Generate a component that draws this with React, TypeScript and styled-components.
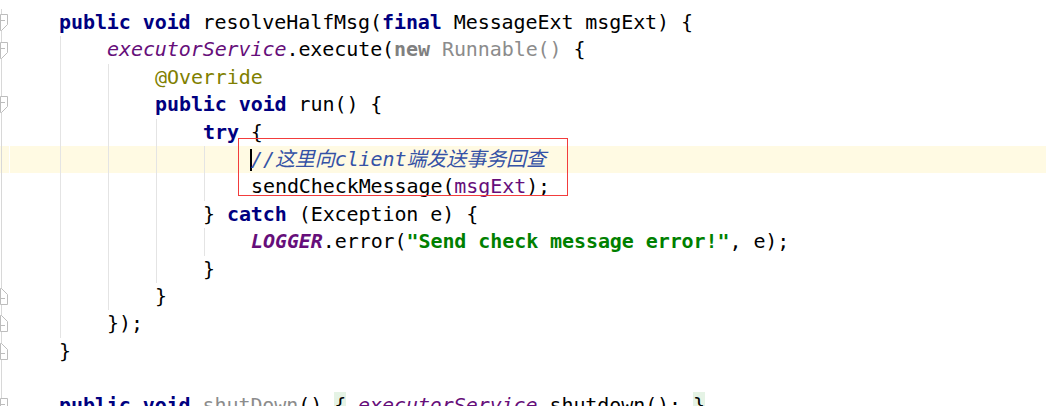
import React from 'react'
import styled, { createGlobalStyle, css } from 'styled-components'

type Kind = 'plain' | 'kw' | 'field' | 'annot' | 'fadedKw' | 'faded' | 'str' | 'const' | 'var' | 'comment' | 'unused' | 'fold'
type Token = [Kind, string]
type Fold = 'open' | 'close' | undefined

interface Line {
  indent: number
  guides: number
  tokens: Token[]
  fold?: Fold
  current?: boolean
  caret?: boolean
}

const GlobalStyle = createGlobalStyle`
  html, body {
    margin: 0;
    padding: 0;
    background: #ffffff;
  }
  body {
    width: 1046px;
    height: 406px;
    overflow: hidden;
  }
`

const Editor = styled.div`
  position: relative;
  width: 1046px;
  height: 406px;
  padding-top: 9px;
  box-sizing: border-box;
  overflow: hidden;
  display: flex;
  flex-direction: column;
  background: #ffffff;
  font-family: 'DejaVu Sans Mono', 'Noto Sans CJK SC', monospace;
  font-size: 20px;
  letter-spacing: -0.08px;
  color: #000000;
`

const Row = styled.div<{ $current?: boolean }>`
  display: flex;
  flex: none;
  height: 27.4px;
  line-height: 27.4px;
  background: ${({ $current }) => ($current ? '#fffae3' : 'transparent')};
`

const Gutter = styled.div`
  flex: none;
  width: 9px;
  margin-right: 1px;
  display: flex;
  align-items: center;
  background: linear-gradient(to right, transparent 1px, #d8d8d8 1px, #d8d8d8 2px, transparent 2px);
  box-shadow: 1px 0 0 #ffffff;
`

const Code = styled.div`
  display: flex;
  align-items: stretch;
  padding-left: 49px;
  white-space: pre;
`

const Indent = styled.span<{ $guide: boolean }>`
  flex: none;
  width: 48px;
  ${({ $guide }) =>
    $guide &&
    css`
      background: linear-gradient(to right, transparent 1px, #e4e4e4 1px, #e4e4e4 2px, transparent 2px);
    `}
`

const Text = styled.span`
  display: inline-flex;
  align-items: center;
`

const palette: Record<Kind, ReturnType<typeof css>> = {
  plain: css``,
  kw: css`color: #000080; font-weight: bold;`,
  field: css`color: #660e7a; font-style: italic;`,
  annot: css`color: #808000;`,
  fadedKw: css`color: #808080; font-weight: bold;`,
  faded: css`color: #8c8c8c;`,
  str: css`color: #008000; font-weight: bold;`,
  const: css`color: #660e7a; font-weight: bold; font-style: italic;`,
  var: css`color: #660e7a;`,
  comment: css`color: #3552a6; font-style: italic;`,
  unused: css`color: #8c8c8c;`,
  fold: css`background: #e5f3e5;`,
}

const Tok = styled.span<{ $kind: Kind }>`
  ${({ $kind }) => palette[$kind]}
`

const Caret = styled.span`
  display: inline-block;
  width: 2px;
  height: 22px;
  margin-right: -1px;
  margin-left: -1px;
  background: #000000;
`

const ReviewBox = styled.div`
  position: absolute;
  left: 238px;
  top: 138px;
  width: 328px;
  height: 56px;
  border: 1px solid #f23c3c;
  pointer-events: none;
`

function FoldMarker({ dir }: { dir: 'open' | 'close' }) {
  const flip = dir === 'close' ? 'translate(0 17) scale(1 -1)' : undefined
  return (
    <svg width="9" height="17" viewBox="0 0 9 17">
      <g transform={flip}>
        <path d="M0.5 0.5 H7.5 V10.5 L1.5 16.5 H0.5 Z" fill="#ffffff" stroke="#bdbdbd" strokeWidth="1" />
        <path d="M0 6.5 H5" stroke="#bdbdbd" strokeWidth="1" />
      </g>
    </svg>
  )
}

const lines: Line[] = [
  {
    indent: 0, guides: 0, fold: 'open',
    tokens: [['kw', 'public void'], ['plain', ' resolveHalfMsg('], ['kw', 'final'], ['plain', ' MessageExt msgExt) {']],
  },
  {
    indent: 1, guides: 1, fold: 'open',
    tokens: [['field', 'executorService'], ['plain', '.execute('], ['fadedKw', 'new'], ['faded', ' Runnable()'], ['plain', ' {']],
  },
  { indent: 2, guides: 2, tokens: [['annot', '@Override']] },
  {
    indent: 2, guides: 2, fold: 'open',
    tokens: [['kw', 'public void'], ['plain', ' run() {']],
  },
  { indent: 3, guides: 3, tokens: [['kw', 'try'], ['plain', ' {']] },
  { indent: 4, guides: 4, current: true, caret: true, tokens: [['comment', '//这里向client端发送事务回查']] },
  { indent: 4, guides: 4, tokens: [['plain', 'sendCheckMessage('], ['var', 'msgExt'], ['plain', ');']] },
  { indent: 3, guides: 3, tokens: [['plain', '} '], ['kw', 'catch'], ['plain', ' (Exception e) {']] },
  {
    indent: 4, guides: 4,
    tokens: [['const', 'LOGGER'], ['plain', '.error('], ['str', '"Send check message error!"'], ['plain', ', e);']],
  },
  { indent: 3, guides: 3, tokens: [['plain', '}']] },
  { indent: 2, guides: 2, fold: 'close', tokens: [['plain', '}']] },
  { indent: 1, guides: 1, fold: 'close', tokens: [['plain', '});']] },
  { indent: 0, guides: 0, fold: 'close', tokens: [['plain', '}']] },
  { indent: 0, guides: 0, tokens: [] },
  {
    indent: 0, guides: 0, fold: 'open',
    tokens: [
      ['kw', 'public void'], ['plain', ' '], ['unused', 'shutDown'], ['plain', '() '], ['fold', '{'],
      ['plain', ' '], ['field', 'executorService'], ['plain', '.shutdown(); '], ['fold', '}'],
    ],
  },
]

export default function App() {
  return (
    <>
      <GlobalStyle />
      <Editor>
        {lines.map((line, i) => (
          <Row key={i} $current={line.current}>
            <Gutter>{line.fold && <FoldMarker dir={line.fold} />}</Gutter>
            <Code>
              {Array.from({ length: line.indent }).map((_, k) => (
                <Indent key={k} $guide={k < line.guides} />
              ))}
              <Text>
                {line.caret && <Caret />}
                {line.tokens.map(([kind, text], t) => (
                  <Tok key={t} $kind={kind}>{text}</Tok>
                ))}
              </Text>
            </Code>
          </Row>
        ))}
        <ReviewBox />
      </Editor>
    </>
  )
}
